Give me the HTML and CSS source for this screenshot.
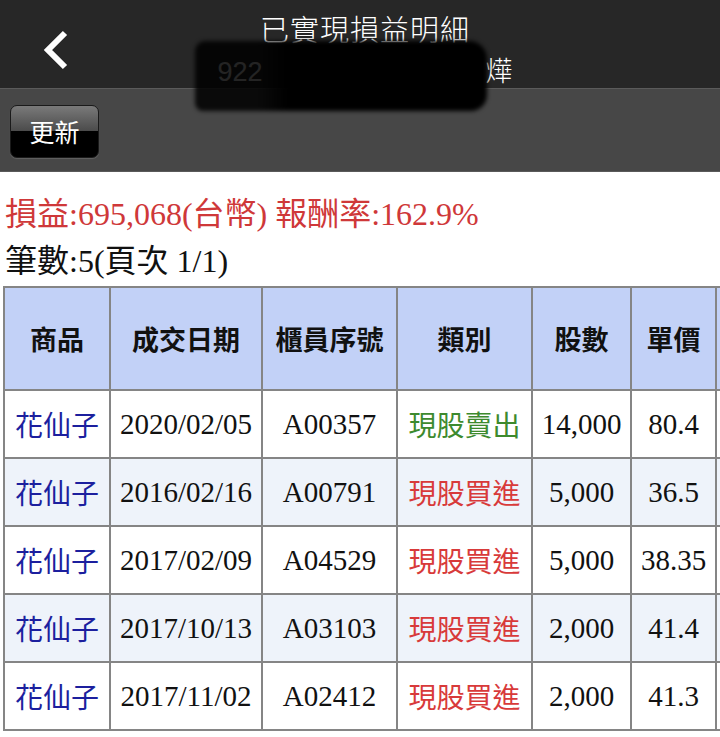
FILE: index.html
```html
<!DOCTYPE html>
<html lang="zh-Hant">
<head>
    <meta charset="UTF-8">
    <meta name="viewport" content="width=device-width, initial-scale=1.0">
    <title>已實現損益明細</title>
    <link rel="stylesheet" href="styles.css">
</head>
<body>
    <div class="nav-bar">
        <button class="back-btn" aria-label="返回">
            <svg width="30" height="44" viewBox="0 0 30 44">
                <polyline points="24,7 7,24 24,41" fill="none" stroke="#fff" stroke-width="6" stroke-linejoin="miter"/>
            </svg>
        </button>
        <div class="nav-title">
            <div class="title">已實現損益明細</div>
            <div class="subtitle">922<span class="masked-gap"></span>燁</div>
            <div class="redact"></div>
        </div>
    </div>
    <div class="tool-bar">
        <button class="refresh-btn">更新</button>
    </div>

    <div class="summary">
        <div class="profit">損益:695,068(台幣) 報酬率:162.9%</div>
        <div class="count">筆數:5(頁次 1/1)</div>
    </div>

    <div class="table-wrap">
        <table class="detail-table">
            <colgroup>
                <col style="width: 106px">
                <col style="width: 152px">
                <col style="width: 135px">
                <col style="width: 135px">
                <col style="width: 99px">
                <col style="width: 85px">
                <col style="width: 150px">
            </colgroup>
            <thead>
                <tr>
                    <th>商品</th>
                    <th>成交日期</th>
                    <th>櫃員序號</th>
                    <th>類別</th>
                    <th>股數</th>
                    <th>單價</th>
                    <th></th>
                </tr>
            </thead>
            <tbody id="rows"></tbody>
        </table>
    </div>

    <script>
        const trades = [
            { name: "花仙子", date: "2020/02/05", serial: "A00357", type: "現股賣出", qty: "14,000", price: "80.4" },
            { name: "花仙子", date: "2016/02/16", serial: "A00791", type: "現股買進", qty: "5,000", price: "36.5" },
            { name: "花仙子", date: "2017/02/09", serial: "A04529", type: "現股買進", qty: "5,000", price: "38.35" },
            { name: "花仙子", date: "2017/10/13", serial: "A03103", type: "現股買進", qty: "2,000", price: "41.4" },
            { name: "花仙子", date: "2017/11/02", serial: "A02412", type: "現股買進", qty: "2,000", price: "41.3" }
        ];

        const rows = document.getElementById("rows");

        trades.forEach((t) => {
            const tr = document.createElement("tr");
            const typeClass = t.type === "現股賣出" ? "sell" : "buy";
            // last column is scrolled off-screen in the app, left blank here
            tr.innerHTML = `
                <td class="product">${t.name}</td>
                <td>${t.date}</td>
                <td>${t.serial}</td>
                <td class="${typeClass}">${t.type}</td>
                <td>${t.qty}</td>
                <td>${t.price}</td>
                <td></td>`;
            rows.appendChild(tr);
        });
    </script>
</body>
</html>
```

FILE: styles.css
```css
body {
    margin: 0;
    padding: 0;
    background: #fff;
    color: #111;
    font-family: "Liberation Serif", "Noto Sans CJK TC", serif;
    overflow: hidden;
}

.nav-bar {
    position: relative;
    height: 88px;
    background: #272727;
    border-bottom: 1px solid #5b5b5b;
    display: flex;
    align-items: flex-start;
}

.back-btn {
    margin: 26px 0 0 41px;
    padding: 0;
    border: none;
    background: none;
    width: 30px;
    height: 44px;
    cursor: pointer;
}

.nav-title {
    position: absolute;
    left: 0;
    right: 0;
    top: 8px;
    padding-left: 10px;
    text-align: center;
    color: #fff;
    font-family: "Noto Sans CJK TC", sans-serif;
    pointer-events: none;
}

.title {
    font-size: 29px;
    line-height: 40px;
    letter-spacing: 1px;
    font-weight: 300;
}

.subtitle {
    margin-top: 6px;
    font-family: "Liberation Sans", "Noto Sans CJK TC", sans-serif;
    font-size: 27px;
    line-height: 36px;
    font-weight: 300;
}

.masked-gap {
    display: inline-block;
    width: 223px;
}

.redact {
    position: absolute;
    left: 195px;
    top: 33px;
    width: 292px;
    height: 70px;
    border-radius: 10px 18px 16px 8px;
    background: linear-gradient(90deg, rgba(0, 0, 0, 0.86) 0%, rgba(0, 0, 0, 0.86) 22%, #000 32%, #000 100%);
    filter: blur(2px);
}

.tool-bar {
    height: 82px;
    background: #474747;
    border-bottom: 1px solid #5a5a5a;
    display: flex;
    align-items: center;
    padding-left: 10px;
}

.refresh-btn {
    width: 89px;
    height: 53px;
    margin-top: 2px;
    border: 1px solid #1a1a1a;
    border-radius: 7px;
    background: linear-gradient(#7a7a7a 0%, #4a4a4a 50%, #000 50%, #000 100%);
    color: #fff;
    font-family: "Noto Sans CJK TC", sans-serif;
    font-size: 25px;
    padding: 0;
    box-shadow: 0 1px 1px rgba(255, 255, 255, 0.15);
    cursor: pointer;
}

.summary {
    padding: 19px 0 0 5px;
    font-size: 32px;
    line-height: 47px;
}

.profit {
    color: #cf3839;
}

.count {
    color: #111;
}

.table-wrap {
    padding: 1px 0 0 3px;
    overflow: hidden;
}

.detail-table {
    border-collapse: collapse;
    table-layout: fixed;
    width: 862px;
}

.detail-table th,
.detail-table td {
    border: 2px solid #858585;
    text-align: center;
    padding: 0;
    white-space: nowrap;
}

.detail-table th {
    height: 101px;
    background: #c2d1f7;
    font-family: "Noto Sans CJK TC", sans-serif;
    font-size: 27px;
    font-weight: bold;
    color: #111;
}

.detail-table td {
    height: 66px;
    font-size: 29px;
    color: #111;
}

.detail-table tbody tr:nth-child(even) td {
    background: #eef3fa;
}

.detail-table td.product {
    font-family: "Noto Sans CJK TC", sans-serif;
    font-size: 28px;
    color: #1c1f9e;
}

.detail-table td.buy {
    font-family: "Noto Sans CJK TC", sans-serif;
    font-size: 28px;
    color: #d83a3a;
}

.detail-table td.sell {
    font-family: "Noto Sans CJK TC", sans-serif;
    font-size: 28px;
    color: #3d8a2e;
}
```
